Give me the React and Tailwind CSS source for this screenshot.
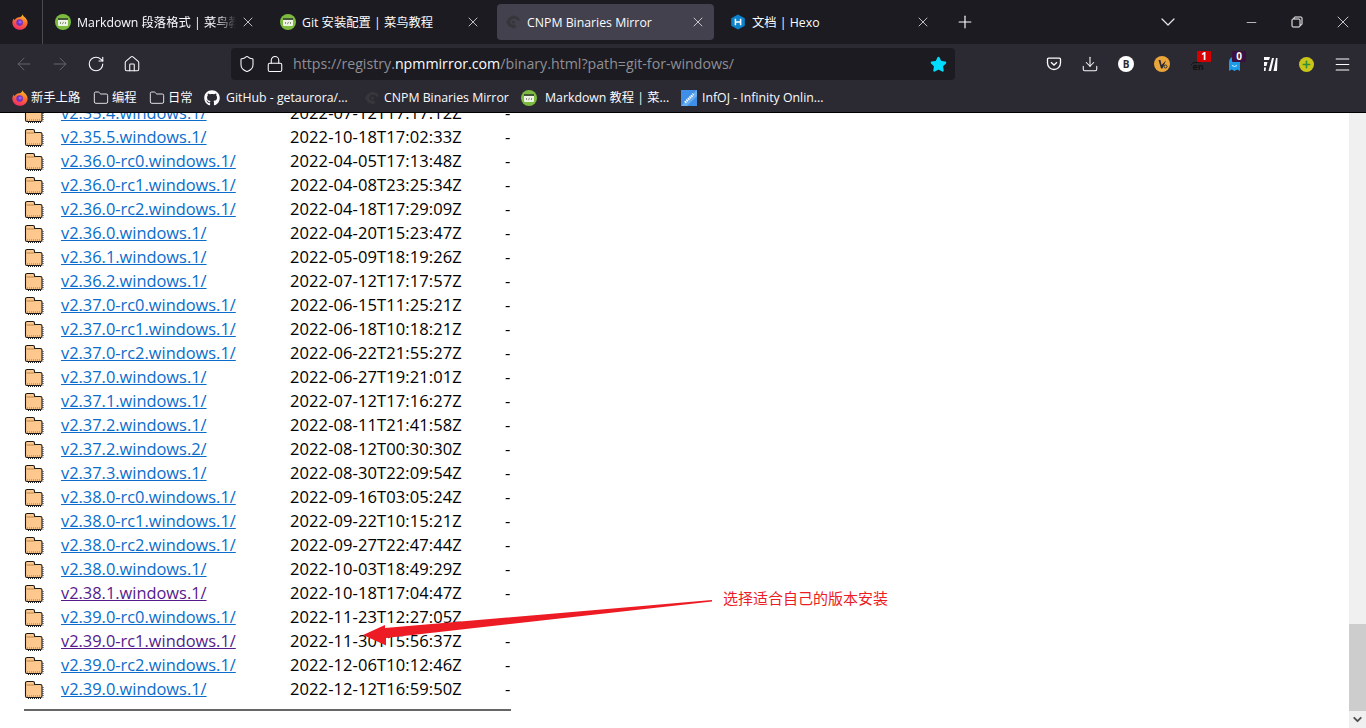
import { ArrowLeft, ArrowRight, ChevronDown, Download, Folder, Home, Lock, Menu, Minus, Plus, RotateCw, Shield, Star, X } from "lucide-react";
import { FaGithub } from "react-icons/fa";

const rows = [
  ["v2.35.4.windows.1/", "2022-07-12T17:17:12Z"],
  ["v2.35.5.windows.1/", "2022-10-18T17:02:33Z"],
  ["v2.36.0-rc0.windows.1/", "2022-04-05T17:13:48Z"],
  ["v2.36.0-rc1.windows.1/", "2022-04-08T23:25:34Z"],
  ["v2.36.0-rc2.windows.1/", "2022-04-18T17:29:09Z"],
  ["v2.36.0.windows.1/", "2022-04-20T15:23:47Z"],
  ["v2.36.1.windows.1/", "2022-05-09T18:19:26Z"],
  ["v2.36.2.windows.1/", "2022-07-12T17:17:57Z"],
  ["v2.37.0-rc0.windows.1/", "2022-06-15T11:25:21Z"],
  ["v2.37.0-rc1.windows.1/", "2022-06-18T10:18:21Z"],
  ["v2.37.0-rc2.windows.1/", "2022-06-22T21:55:27Z"],
  ["v2.37.0.windows.1/", "2022-06-27T19:21:01Z"],
  ["v2.37.1.windows.1/", "2022-07-12T17:16:27Z"],
  ["v2.37.2.windows.1/", "2022-08-11T21:41:58Z"],
  ["v2.37.2.windows.2/", "2022-08-12T00:30:30Z"],
  ["v2.37.3.windows.1/", "2022-08-30T22:09:54Z"],
  ["v2.38.0-rc0.windows.1/", "2022-09-16T03:05:24Z"],
  ["v2.38.0-rc1.windows.1/", "2022-09-22T10:15:21Z"],
  ["v2.38.0-rc2.windows.1/", "2022-09-27T22:47:44Z"],
  ["v2.38.0.windows.1/", "2022-10-03T18:49:29Z"],
  ["v2.38.1.windows.1/", "2022-10-18T17:04:47Z", true],
  ["v2.39.0-rc0.windows.1/", "2022-11-23T12:27:05Z"],
  ["v2.39.0-rc1.windows.1/", "2022-11-30T15:56:37Z", true],
  ["v2.39.0-rc2.windows.1/", "2022-12-06T10:12:46Z"],
  ["v2.39.0.windows.1/", "2022-12-12T16:59:50Z"],
];

function FirefoxLogo() {
  return (
    <svg width="16" height="16" viewBox="0 0 16 16">
      <defs>
        <linearGradient id="ff" x1="0.7" y1="0" x2="0.3" y2="1">
          <stop offset="0" stopColor="#ffc22e" />
          <stop offset="0.45" stopColor="#ff6a2c" />
          <stop offset="1" stopColor="#ee2a6c" />
        </linearGradient>
      </defs>
      <path d="M10.6 0.2c0.2 1.5 1.6 2.3 2.8 3.6 1.3 1.5 2.2 3.2 2.2 4.7 0 4.1-3.4 7.3-7.6 7.3S0.4 12.6 0.4 8.7c0-1.7 0.5-3.2 1.3-4.3 0.1 0.8 0.5 1.3 1 1.5C3.4 4.5 5 3.5 7.2 3.2 8.9 2.9 10.4 1.8 10.6 0.2z" fill="url(#ff)" />
      <circle cx="7.6" cy="8.6" r="3.3" fill="#6b34c8" />
      <circle cx="8.2" cy="8" r="1.6" fill="#a25bf0" />
    </svg>
  );
}

function CodeFavicon() {
  return (
    <svg width="16" height="16" viewBox="0 0 16 16">
      <circle cx="8" cy="8" r="8" fill="#7cbb3f" />
      <rect x="3" y="4" width="10" height="8" rx="1" fill="#eef3e6" />
      <rect x="3" y="4" width="10" height="2" fill="#44553a" />
      <path d="M6 8l-1 1 1 1M10 8l1 1-1 1M8.6 7.8l-1.2 2.4" stroke="#5a6a50" strokeWidth="0.7" fill="none" />
    </svg>
  );
}

function CnpmFavicon() {
  return (
    <svg width="16" height="16" viewBox="0 0 16 16">
      <path d="M8 1.5l5 1.5 2 3-2 1-2-2H7L5 8l2 2.5h3l1.5 2.5-3 1.5L3.5 12 1 8l2.5-4z" fill="#37363c" />
      <circle cx="8.5" cy="8" r="1.6" fill="#37363c" />
    </svg>
  );
}

function HexoFavicon() {
  return (
    <svg width="16" height="16" viewBox="0 0 16 16">
      <path d="M8 0.5l6.8 3.8v7.4L8 15.5l-6.8-3.8V4.3z" fill="#0e83cd" />
      <path d="M5.4 4.8v6.4M10.6 4.8v6.4M5.4 8h5.2" stroke="#fff" strokeWidth="1.5" fill="none" />
    </svg>
  );
}

function InfojFavicon() {
  return (
    <svg width="16" height="16" viewBox="0 0 16 16">
      <rect width="16" height="16" fill="#3f8fe8" />
      <path d="M0 16L16 0v6L6 16z" fill="#6aaef2" />
      <path d="M4 12.5L12.5 4" stroke="#fff" strokeWidth="2.4" strokeDasharray="1.4 0.8" fill="none" />
    </svg>
  );
}

function Tab({ icon, title, active, fade }) {
  return (
    <div className="w-[225px] h-[44px] py-1 px-1 shrink-0">
      <div className={`h-[36px] flex items-center pl-2 pr-1 rounded-[4px] ${active ? "bg-[#42414d]" : ""}`}>
        <span className="w-4 h-4 shrink-0">{icon}</span>
        <span className={`ml-[6px] flex-1 whitespace-nowrap overflow-hidden text-[12.3px] leading-[18px] mt-[1px] text-[#fbfbfe] ${fade ? "[mask-image:linear-gradient(to_right,black_88%,transparent)]" : ""}`}>{title}</span>
        <span className="w-4 h-4 mx-1 flex items-center justify-center shrink-0">
          <X size={16} strokeWidth={1.2} color="#e8e8ea" />
        </span>
      </div>
    </div>
  );
}

function ToolButton({ children }) {
  return <div className="w-9 h-10 flex items-center justify-center shrink-0">{children}</div>;
}

function Bookmark({ icon, label, className, labelClass = "ml-[5px]" }) {
  return (
    <div className={`flex items-center whitespace-nowrap ${className}`}>
      <span className="w-4 h-4 shrink-0">{icon}</span>
      <span className={`${labelClass} text-[12.3px] text-[#fbfbfe]`}>{label}</span>
    </div>
  );
}

function FolderIcon() {
  return (
    <svg width="20" height="19" viewBox="0 0 20 19" className="block">
      <path d="M1.5 16V3A1.5 1.5 0 0 1 3 1.5h6A1.5 1.5 0 0 1 10.5 3v1.5h6A1.5 1.5 0 0 1 18 6v10a1.5 1.5 0 0 1-1.5 1.5H3A1.5 1.5 0 0 1 1.5 16z" fill="#fdc78e" stroke="#1a1a1a" strokeWidth="1.1" />
      <path d="M2.5 5h8" stroke="#b9874f" strokeWidth="1" />
      <path d="M19 7v10.5M4 18.5h14" stroke="#222" strokeWidth="1" strokeDasharray="1 1" />
      <path d="M3 16h13.5" stroke="#9c7344" strokeWidth="1" strokeDasharray="1 1" />
    </svg>
  );
}

function BrowserChrome() {
  return (
    <div className="h-[113px] shrink-0 border-b border-black font-['Open_Sans','Noto_Sans_CJK_SC',sans-serif]">
      {/* tab strip */}
      <div className="h-[44px] bg-[#1c1b22] flex items-center">
        <div className="w-[43px] h-[44px] border-r border-[#4a4950] flex items-center justify-center pr-[3px]">
          <FirefoxLogo />
        </div>
        <Tab icon={<CodeFavicon />} title="Markdown 段落格式 | 菜鸟教程" fade />
        <Tab icon={<CodeFavicon />} title="Git 安装配置 | 菜鸟教程" />
        <Tab icon={<CnpmFavicon />} title="CNPM Binaries Mirror" active />
        <Tab icon={<HexoFavicon />} title="文档 | Hexo" />
        <Plus size={20} strokeWidth={1.4} color="#fbfbfe" className="ml-[12px]" />
        <ChevronDown size={24} strokeWidth={1.2} color="#e8e8ea" className="ml-[181px]" />
        <div className="ml-auto flex items-center">
          <div className="w-[46px] flex justify-center"><Minus size={15} strokeWidth={1.1} color="#fff" /></div>
          <div className="w-[46px] flex justify-center">
            <svg width="12" height="12" viewBox="0 0 12 12" fill="none" stroke="#fff" strokeWidth="1">
              <rect x="1" y="3" width="8" height="8" rx="1" />
              <path d="M3 3V2a1 1 0 0 1 1-1h6a1 1 0 0 1 1 1v6a1 1 0 0 1-1 1H9" />
            </svg>
          </div>
          <div className="w-[46px] flex justify-center"><X size={20} strokeWidth={0.9} color="#fff" /></div>
        </div>
      </div>
      {/* nav bar */}
      <div className="h-[40px] bg-[#2b2a33] flex items-center pl-[6px]">
        <ToolButton><ArrowLeft size={20} strokeWidth={1.2} color="#66656c" /></ToolButton>
        <ToolButton><ArrowRight size={20} strokeWidth={1.2} color="#66656c" /></ToolButton>
        <ToolButton><RotateCw size={18} strokeWidth={1.5} color="#fbfbfe" /></ToolButton>
        <ToolButton><Home size={18} strokeWidth={1.4} color="#fbfbfe" /></ToolButton>
        <div className="ml-[81px] w-[724px] h-[32px] bg-[#1c1b22] rounded-[4px] flex items-center pl-[7px] pr-2">
          <Shield size={18} strokeWidth={1.4} color="#fbfbfe" />
          <Lock size={18} strokeWidth={1.4} color="#fbfbfe" className="ml-[10px]" />
          <span className="ml-[9px] text-[14.2px] text-[#8f8f94] whitespace-nowrap">
            https://registry.<span className="text-[#fbfbfe]">npmmirror.com</span>/binary.html?path=git-for-windows/
          </span>
          <Star size={17} fill="#00ddff" color="#00ddff" className="ml-auto" />
        </div>
        <div className="ml-[81px] flex items-center">
          <ToolButton>
            <svg width="16" height="16" viewBox="0 0 16 16" fill="none" stroke="#fbfbfe" strokeWidth="1.3">
              <path d="M2.5 2.2h11A1 1 0 0 1 14.5 3.2V7A6.5 6.5 0 0 1 1.5 7V3.2a1 1 0 0 1 1-1z" />
              <path d="M5 6.2l3 2.8 3-2.8" />
            </svg>
          </ToolButton>
          <ToolButton><Download size={18} strokeWidth={1.4} color="#fbfbfe" /></ToolButton>
          <ToolButton>
            <span className="w-4 h-4 rounded-full bg-white text-[#2b2a33] text-[10px] font-bold flex items-center justify-center">B</span>
          </ToolButton>
          <ToolButton>
            <svg width="16" height="16" viewBox="0 0 16 16">
              <circle cx="8" cy="8" r="8" fill="#eaa63a" />
              <path d="M4.5 4L7 12.5h1.5L12 4.5 7.5 9 6.5 4z" fill="#2b2a33" />
              <circle cx="11.5" cy="10.5" r="1.5" fill="none" stroke="#2b2a33" strokeWidth="1" />
            </svg>
          </ToolButton>
          <ToolButton>
            <span className="relative w-4 h-4 flex items-end justify-center">
              <svg className="absolute left-0 top-[2px]" width="16" height="8" viewBox="0 0 16 8"><path d="M1 7C4 2 9 7 14 1" stroke="#111" strokeWidth="1" fill="none" /></svg>
              <span className="text-[9px] leading-[10px] text-[#111] font-bold">en</span>
              <span className="absolute -top-[5px] left-[7px] w-[14px] h-[11px] bg-[#d70000] rounded-[1px] text-white text-[10px] leading-[11px] font-bold text-center">1</span>
            </span>
          </ToolButton>
          <ToolButton>
            <span className="relative w-4 h-4 flex justify-center">
              <svg width="13" height="16" viewBox="0 0 13 16">
                <path d="M1 15V6a5.5 5.5 0 0 1 11 0v9l-2.7-1.5L6.5 15l-2.8-1.5z" fill="#1e9be8" />
                <path d="M4 9.5q2.5 2 5 0" stroke="#fff" strokeWidth="0.8" fill="none" />
              </svg>
              <span className="absolute -top-[5px] left-[6px] w-[14px] h-[11px] bg-[#3a1040] rounded-[1px] text-white text-[10px] leading-[11px] font-bold text-center">0</span>
            </span>
          </ToolButton>
          <ToolButton>
            <svg width="15" height="14" viewBox="0 0 15 14" fill="#fbfbfe">
              <path d="M1 0h6L6 3H1zM1 5h3.5L3.5 9H1zM1 10.5h2L2.5 14H1zM9 1h2L8 14H5.5zM13 1h1.5L14 14h-3.5z" />
            </svg>
          </ToolButton>
          <ToolButton>
            <span className="w-[15px] h-[15px] rounded-full bg-[#c9c51a] flex items-center justify-center">
              <Plus size={11} strokeWidth={3.5} color="#2f8f3a" />
            </span>
          </ToolButton>
          <ToolButton><Menu size={19} strokeWidth={1.3} color="#fbfbfe" /></ToolButton>
        </div>
      </div>
      {/* bookmarks */}
      <div className="h-[28px] bg-[#2b2a33] flex items-center pl-3">
        <Bookmark icon={<FirefoxLogo />} label="新手上路" className="w-[81px]" labelClass="ml-[3px]" />
        <Bookmark icon={<Folder size={16} strokeWidth={1.3} color="#fbfbfe" />} label="编程" className="w-[56px]" labelClass="ml-[3px]" />
        <Bookmark icon={<Folder size={16} strokeWidth={1.3} color="#fbfbfe" />} label="日常" className="w-[55px]" labelClass="ml-[3px]" />
        <Bookmark icon={<FaGithub size={16} color="#fbfbfe" />} label="GitHub - getaurora/..." className="w-[160px]" labelClass="ml-[6px]" />
        <Bookmark icon={<CnpmFavicon />} label="CNPM Binaries Mirror" className="w-[157px]" labelClass="ml-[4px]" />
        <Bookmark icon={<CodeFavicon />} label="Markdown 教程 | 菜..." className="w-[160px]" labelClass="ml-[8px]" />
        <Bookmark icon={<InfojFavicon />} label="InfOJ - Infinity Onlin..." />
      </div>
    </div>
  );
}

function Scrollbar() {
  return (
    <div className="w-[17px] shrink-0 bg-[#f0f0f0] flex flex-col">
      <div className="flex-1" />
      <div className="h-[87px] bg-[#cdcdcd]" />
      <div className="h-[17px] flex items-center justify-center">
        <ChevronDown size={13} strokeWidth={3.5} color="#505050" />
      </div>
    </div>
  );
}

export default function App() {
  return (
    <div className="relative w-[1366px] h-[728px] overflow-hidden flex flex-col bg-white">
      <BrowserChrome />
      <div className="flex-1 flex min-h-0">
        <div className="flex-1 overflow-hidden pl-6 font-['Open_Sans','Noto_Sans_CJK_SC',sans-serif] text-[16.5px] text-black">
          <div className="-mt-[12px] w-[487px]">
            {rows.map(([name, date, visited]) => (
              <div key={name} className="h-6 flex items-center">
                <span className="w-[37px] shrink-0"><FolderIcon /></span>
                <a className={`w-[229px] shrink-0 underline whitespace-nowrap text-[16.4px] ${visited ? "text-[#551a8b]" : "text-[#0a6ccb]"}`}>{name}</a>
                <span className="w-[215px] shrink-0 whitespace-nowrap tracking-[0.1px]">{date}</span>
                <span>-</span>
              </div>
            ))}
            <div className="mt-[8px] h-[2px] bg-[#666666]" />
          </div>
        </div>
        <Scrollbar />
      </div>

      {/* screenshot annotation */}
      <svg className="absolute left-0 top-0 pointer-events-none" width="1366" height="728">
        <path d="M712 600L712 601.5L386 638L386 645.5L363 635L385 625L385 628z" fill="#ed1c24" />
      </svg>
      <span className="absolute left-[723px] top-[588px] text-[15px] leading-5 text-[#ed1c24] font-['Noto_Sans_CJK_SC',sans-serif]">选择适合自己的版本安装</span>
    </div>
  );
}
